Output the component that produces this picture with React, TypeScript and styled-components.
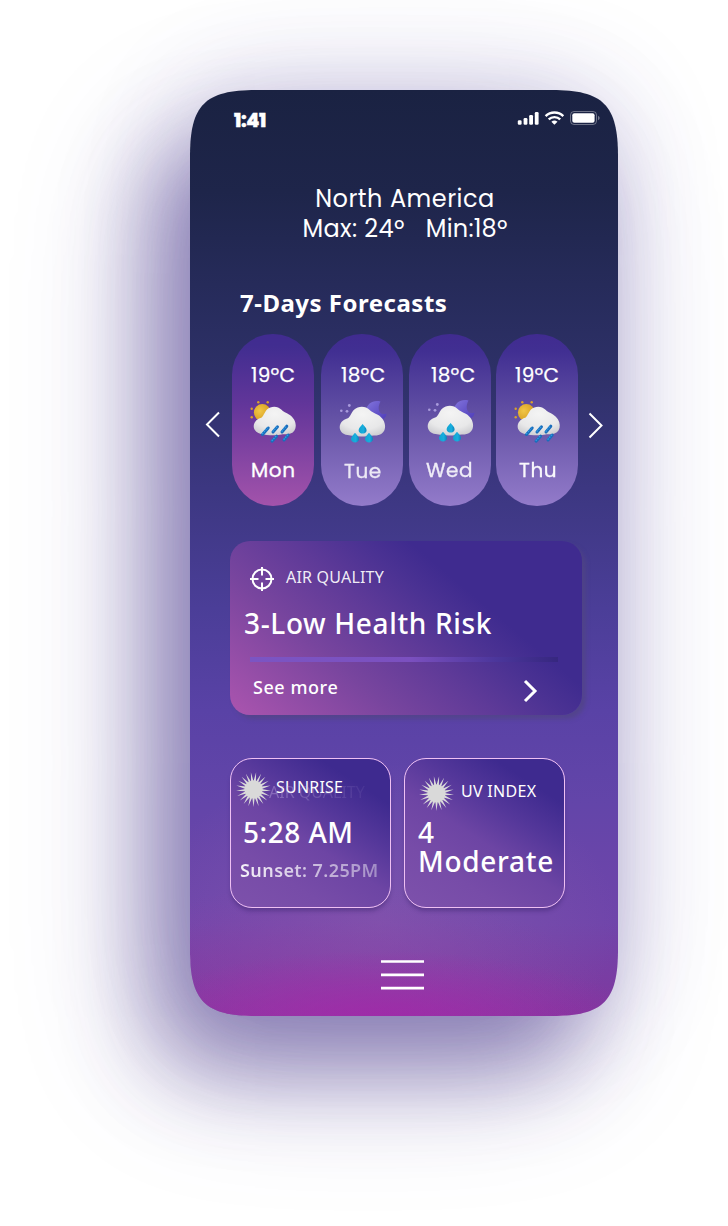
import React from "react";
import styled, { createGlobalStyle } from "styled-components";

const GlobalStyle = createGlobalStyle`
  * { box-sizing: border-box; }
  html, body { margin: 0; background: #fff; }
`;

const geometric = `"Poppins", Inter, sans-serif`;
const humanist = `"Noto Sans", "Open Sans", sans-serif`;

const Stage = styled.main`
  width: 728px;
  height: 1226px;
  padding: 90px 110px 0 190px;
  overflow: hidden;
  background: #fff;
`;

const Shadow = styled.div`
  width: 428px;
  height: 926px;
  border-radius: 62px;
  box-shadow:
    0 0 110px rgba(62, 44, 145, 0.2),
    -38px 56px 90px rgba(58, 38, 125, 0.45),
    -36px 50px 150px rgba(62, 44, 145, 0.2);
`;

const Phone = styled.div`
  width: 428px;
  height: 926px;
  display: flex;
  flex-direction: column;
  color: #fff;
  clip-path: path("M0 66C0 15 15 0 66 0H362C413 0 428 15 428 66V860C428 911 413 926 362 926H66C15 926 0 911 0 860Z");
  background:
    radial-gradient(ellipse 260px 75px at 45% 101%, rgba(166, 36, 170, 0.8), rgba(164, 36, 170, 0) 100%),
    radial-gradient(ellipse 300px 130px at 30% 100%, rgba(150, 60, 165, 0.6), rgba(145, 70, 170, 0) 100%),
    radial-gradient(ellipse 240px 160px at 44% 90%, rgba(138, 98, 176, 0.5), rgba(138, 98, 176, 0) 100%),
    linear-gradient(180deg, #1a2242 0%, #1e254a 11%, #262b5a 21%, #2d3067 30%, #3c3781 43%, #4b3e98 56%, #5942a6 67%, #6345a9 77%, #7045aa 90%, #80379e 100%);
`;

const StatusBar = styled.div`
  height: 50px;
  padding: 19px 17px 0 43px;
  display: flex;
  justify-content: space-between;
  align-items: flex-start;
`;

const Clock = styled.span`
  margin: 0 0 0 1px;
  font: 800 19px/24px ${geometric};
  letter-spacing: -0.4px;
  -webkit-text-stroke: 0.4px #fff;
`;

const Region = styled.header`
  margin-top: 44px;
  height: 60px;
  padding-left: 2px;
  display: flex;
  flex-direction: column;
  align-items: center;
  font: 400 24px/30px ${geometric};
`;

const Range = styled.div`
  display: flex;
  gap: 21px;
`;

const Label = styled.span<{ $s?: number }>`
  white-space: pre;
  letter-spacing: ${(p) => p.$s ?? 0}px;
`;

const ForecastTitle = styled.h2`
  margin: 43px 0 0 50px;
  height: 32px;
  font: 700 24px/32px ${humanist};
  letter-spacing: 0.5px;
`;

const Carousel = styled.section`
  margin-top: 15px;
  height: 172px;
  display: flex;
  padding-left: 15px;
`;

const Arrow = styled.button<{ $w: number; $top: number }>`
  all: unset;
  align-self: flex-start;
  width: ${(p) => p.$w}px;
  padding-top: ${(p) => p.$top}px;
  svg { display: block; }
`;

const Pill = styled.article<{ $warm?: boolean; $gap: number }>`
  width: 82px;
  height: 172px;
  margin-right: ${(p) => p.$gap}px;
  border-radius: 41px;
  overflow: hidden;
  background: ${(p) =>
    p.$warm
      ? "linear-gradient(180deg, #412b90 0%, #412d90 7%, #63369a 42%, #a353ab 100%)"
      : "linear-gradient(180deg, #402b90 0%, #412f92 10%, #6553a6 50%, #937bca 100%)"};
`;

const Temp = styled.div<{ $x: number }>`
  margin: 28px 0 0 ${(p) => p.$x}px;
  font: 400 20px/26px ${geometric};
  letter-spacing: 0.3px;
  -webkit-text-stroke: 0.25px #fff;
  white-space: nowrap;
`;

const IconSlot = styled.div<{ $x: number; $y: number }>`
  height: 69px;
  padding: ${(p) => p.$y}px 0 0 ${(p) => p.$x}px;
  svg { display: block; }
`;

const Day = styled.div<{ $x: number; $y?: number; $s: number; $o?: number }>`
  margin: ${(p) => p.$y ?? 0}px 0 0 ${(p) => p.$x}px;
  font: 400 20px/26px ${geometric};
  letter-spacing: ${(p) => p.$s}px;
  -webkit-text-stroke: 0.3px #fff;
  opacity: ${(p) => p.$o ?? 1};
  white-space: nowrap;
`;

const AirCard = styled.section`
  margin: 35px 0 0 40px;
  width: 352px;
  height: 174px;
  border-radius: 20px;
  padding-top: 24px;
  background: linear-gradient(40deg, #a653ad 3%, #78459e 30%, #5e3a98 48%, #4b3293 60%, #3f2b8f 69%);
  box-shadow: 4px 4px 4px rgba(80, 68, 130, 0.7);
`;

const AirHead = styled.div`
  height: 28px;
  padding-left: 19px;
  display: flex;
  gap: 11px;
  font: 400 16px/24px ${humanist};
  color: rgba(255, 255, 255, 0.92);
`;

const AirTitle = styled.h3`
  margin: 10px 0 0 14px;
  height: 42px;
  font: 500 28px/40px ${humanist};
  letter-spacing: 0.65px;
`;

const Meter = styled.div`
  margin: 12px 0 0 20px;
  width: 308px;
  height: 5px;
  background: linear-gradient(90deg, #7b55c3 0%, #7b50bf 52%, #4b369b 80%, #36277f 100%);
`;

const More = styled.div`
  margin: 13px 44px 0 23px;
  display: flex;
  justify-content: space-between;
  font: 500 18px/25px ${humanist};
  letter-spacing: 0.55px;
  svg { display: block; margin-top: 4px; }
`;

const Cards = styled.section`
  margin: 43px 0 0 40px;
  display: flex;
  gap: 13px;
`;

const SmallCard = styled.article`
  width: 161px;
  height: 150px;
  border: 1px solid #efc0f3;
  border-radius: 22px;
  background: linear-gradient(213deg, #3e2a8f 18%, #54379a 36%, #6d45a4 54%, #774ca8 75%, #7d51ab 100%) padding-box;
  box-shadow: 0 4px 4px -1px rgba(50, 30, 100, 0.4);
  font-family: ${humanist};
`;

const SmallHead = styled.div<{ $x: number; $y: number }>`
  position: relative;
  height: 59px;
  display: flex;
  padding: ${(p) => p.$y}px 0 0 ${(p) => p.$x}px;
  svg { flex: none; display: block; }
`;

const Caption = styled.span<{ $x: number; $y: number; $s?: number }>`
  margin: ${(p) => p.$y}px 0 0 ${(p) => p.$x}px;
  font: 400 16px/22px ${humanist};
  letter-spacing: ${(p) => p.$s ?? 0}px;
  white-space: nowrap;
`;

const Ghost = styled.span`
  position: absolute;
  left: 38px;
  top: 22px;
  font: 400 16px/22px ${humanist};
  white-space: nowrap;
  color: transparent;
  background: linear-gradient(90deg, rgba(200, 180, 230, 0.4), rgba(200, 180, 230, 0.08));
  background-clip: text;
`;

const Value = styled.div<{ $x: number; $s?: number }>`
  margin-left: ${(p) => p.$x}px;
  font: 500 28px/29px ${humanist};
  letter-spacing: ${(p) => p.$s ?? 0}px;
  white-space: nowrap;
`;

const Sunset = styled.div`
  display: inline-block;
  margin: 10px 0 0 9px;
  font: 600 18px/26px ${humanist};
  letter-spacing: 0.42px;
  white-space: nowrap;
  color: transparent;
  background: linear-gradient(90deg, rgba(255, 255, 255, 0.92), rgba(255, 255, 255, 0.4));
  background-clip: text;
`;

const Menu = styled.button`
  all: unset;
  margin: 52px 0 0 191px;
  width: 43px;
  height: 30px;
  svg { display: block; }
`;

const StatusIcons = () => (
  <svg width="84" height="18" viewBox="0 0 84 18" fill="#fff">
    <rect x="0.8" y="11.2" width="3.8" height="4.5" rx="1.2" />
    <rect x="6.6" y="9" width="3.8" height="6.7" rx="1.2" />
    <rect x="12.2" y="6" width="3.8" height="9.7" rx="1.2" />
    <rect x="17.8" y="3" width="3.8" height="12.7" rx="1.2" />
    <g fill="none" stroke="#fff" strokeWidth="2.4">
      <path d="M28.6 7.1C33.5 2.2 41.5 2.2 46.3 7.1" />
      <path d="M31.7 10.4C34.8 7.4 40.1 7.4 43.2 10.4" />
    </g>
    <path d="M34.400 12.700Q37.400 10.400 40.500 12.700L37.400 15.800Z" />
    <rect x="53.500" y="2.500" width="26" height="13" rx="3.500" fill="none" stroke="#fff" strokeOpacity=".36" />
    <rect x="55.300" y="4.300" width="22.300" height="9.400" rx="2" />
    <path d="M81 6.700v4.600q1.700-.7 1.700-2.300T81 6.700Z" fillOpacity=".4" />
  </svg>
);

const Defs = () => (
  <svg width="0" height="0" style={{ display: "block", position: "absolute" }}>
    <defs>
      <radialGradient id="cloud" cx=".5" cy=".25" r=".8">
        <stop offset="0" stopColor="#f4f4f4" />
        <stop offset=".65" stopColor="#e8e8e9" />
        <stop offset="1" stopColor="#cbcbcf" />
      </radialGradient>
      <radialGradient id="sun" cx=".35" cy=".4" r=".7">
        <stop offset="0" stopColor="#f1c647" />
        <stop offset="1" stopColor="#d49a1c" />
      </radialGradient>
      <linearGradient id="moon" x1="0" y1="0" x2="1" y2="1">
        <stop offset="0" stopColor="#8274dc" />
        <stop offset="1" stopColor="#4d3bb8" />
      </linearGradient>
      <linearGradient id="drop" x1="0" y1="0" x2="1" y2="0">
        <stop offset="0" stopColor="#12a3d0" />
        <stop offset=".6" stopColor="#18aede" />
        <stop offset="1" stopColor="#0a84bb" />
      </linearGradient>
    </defs>
  </svg>
);

const CLOUD =
  "M11 33C1 31 1.500 19.500 11.200 16.800C13.500 15.500 14.500 11 17 8.500C21 4.600 28 4.800 31.200 8.600C33 10.800 36.500 11.800 39 13.500C47.500 18.500 48 30 40.500 32.600C37 34 34 33 30 33.800C23 35 16 34 11 33Z";

const SunRain = () => (
  <svg width="48" height="43" viewBox="0 0 48 43">
    <g fill="#d9a02c">
      <circle cx="8.300" cy="1.200" r="1.200" /><circle cx="17.700" cy="1.200" r="1.200" />
      <circle cx="1.700" cy="7.700" r="1.200" /><circle cx="1.700" cy="16.300" r="1.200" />
    </g>
    <circle cx="12.300" cy="11.500" r="8.400" fill="url(#sun)" />
    <path d={CLOUD} fill="url(#cloud)" />
    <g stroke="#1a6dbb" strokeWidth="3" strokeLinecap="round">
      <path d="M12.500 33.500L18.200 27M23 31L27.500 25.800M32 31L36.800 25.200M22 40.200L26.600 35.200M34 39L38.200 34" />
    </g>
    <g stroke="#2f9be6" strokeWidth="1.400" strokeDasharray="1.500 1">
      <path d="M12.200 33L17.800 26.600M22.700 30.600L27.200 25.500M31.700 30.600L36.400 24.900M21.700 39.800L26.200 34.900M33.600 38.600L37.800 33.700" />
    </g>
  </svg>
);

const Drop = ({ x, y }: { x: number; y: number }) => (
  <path
    d="M0-5C2-2.600 4-.8 4 1.200C4 5.700-4 5.700-4 1.200C-4-.8-2-2.600 0-5Z"
    transform={`translate(${x} ${y})`}
    fill="url(#drop)"
  />
);

const MoonRain = () => (
  <svg width="48" height="43" viewBox="0 0 48 43">
    <g fill="#a99bdc">
      <circle cx="2.300" cy="9.800" r="1.300" /><circle cx="8" cy="10.300" r="1.400" /><circle cx="10.300" cy="4.500" r="1.400" />
    </g>
    <path d="M41.500 .5C34-1.500 28 3 27 9C28 19 37 23 43.500 18.500C46 17 47.500 15 47.500 12.500C41.500 15 37 9 41.500 .5Z" fill="url(#moon)" />
    <path d={CLOUD} fill="url(#cloud)" transform="translate(-3.300 -.2) scale(1.079 1.040)" />
    <Drop x={23.600} y={28} />
    <Drop x={16} y={36.800} />
    <Drop x={30} y={36.800} />
  </svg>
);

const RAYS = 21;
const STAR = Array.from({ length: RAYS * 2 }, (_, i) => {
  const a = ((i * 180) / RAYS + 90) * (Math.PI / 180);
  const r = i % 2 ? 8.2 : 17.5;
  return `${(17.5 + r * Math.cos(a)).toFixed(2)},${(17.5 + r * Math.sin(a)).toFixed(2)}`;
}).join(" ");

const Burst = () => (
  <svg width="35" height="35" viewBox="0 0 35 35" fill="#d9d9d9">
    <polygon points={STAR} />
    <circle cx="17.500" cy="17.500" r="9" />
  </svg>
);

const Crosshair = () => (
  <svg width="26" height="28" viewBox="0 0 26 28" fill="none" stroke="#fff" strokeWidth="2">
    <circle cx="13" cy="14" r="9.500" />
    <path d="M13 2v8.500M13 17.500v8.500M1 14h8.500M16.500 14h8.500" />
  </svg>
);

const days = [
  { temp: "19ºC", tx: 19, icon: "sun", ix: 18, iy: 13, day: "Mon", dx: 19, dy: 0, s: 0.6, o: 1, gap: 7, warm: true },
  { temp: "18ºC", tx: 20, icon: "moon", ix: 18, iy: 13, day: "Tue", dx: 23, dy: 1, s: 0.6, o: 0.85, gap: 6 },
  { temp: "18ºC", tx: 22, icon: "moon", ix: 18, iy: 12, day: "Wed", dx: 17, dy: 0, s: 0.6, o: 0.88, gap: 5 },
  { temp: "19ºC", tx: 19, icon: "sun", ix: 18, iy: 13, day: "Thu", dx: 23, dy: 0, s: 0.6, o: 0.96, gap: 10 },
];

export default function App() {
  return (
    <>
      <GlobalStyle />
      <Defs />
      <Stage>
        <Shadow>
          <Phone>
            <StatusBar>
              <Clock>1:41</Clock>
              <StatusIcons />
            </StatusBar>
            <Region>
              <Label $s={0.5}>North America</Label>
              <Range>
                <Label $s={0.4}>Max: 24º</Label>
                <Label $s={0.2}>Min:18º</Label>
              </Range>
            </Region>
            <ForecastTitle>7-Days Forecasts</ForecastTitle>
            <Carousel>
              <Arrow $w={27} $top={77} aria-label="Previous">
                <svg width="16" height="27" viewBox="0 0 16 27" fill="none" stroke="#fff" strokeWidth="2">
                  <path d="M14 1.500L2 13.500L14 25.500" />
                </svg>
              </Arrow>
              {days.map((d) => (
                <Pill key={d.day} $warm={d.warm} $gap={d.gap}>
                  <Temp $x={d.tx}>{d.temp}</Temp>
                  <IconSlot $x={d.ix} $y={d.iy}>{d.icon === "sun" ? <SunRain /> : <MoonRain />}</IconSlot>
                  <Day $x={d.dx} $y={d.dy} $s={d.s} $o={d.o}>{d.day}</Day>
                </Pill>
              ))}
              <Arrow $w={16} $top={78} aria-label="Next">
                <svg width="16" height="27" viewBox="0 0 16 27" fill="none" stroke="#fff" strokeWidth="2">
                  <path d="M1.500 1.500L13.500 13.500L1.500 25.500" />
                </svg>
              </Arrow>
            </Carousel>
            <AirCard>
              <AirHead>
                <Crosshair />
                <Label $s={0.2}>AIR QUALITY</Label>
              </AirHead>
              <AirTitle>3-Low Health Risk</AirTitle>
              <Meter />
              <More>
                See more
                <svg width="15" height="24" viewBox="0 0 15 24" fill="none" stroke="#fff" strokeWidth="3">
                  <path d="M2 2L12 12L2 22" />
                </svg>
              </More>
            </AirCard>
            <Cards>
              <SmallCard>
                <SmallHead $x={4.5} $y={13}>
                  <Ghost>AIR QUALITY</Ghost>
                  <Burst />
                  <Caption $x={5.5} $y={4} $s={0.2}>SUNRISE</Caption>
                </SmallHead>
                <Value $x={12} $s={0.5}>5:28 AM</Value>
                <Sunset>Sunset: 7.25PM</Sunset>
              </SmallCard>
              <SmallCard>
                <SmallHead $x={13.5} $y={16.5}>
                  <Burst />
                  <Caption $x={7.5} $y={4.5} $s={0.3}>UV INDEX</Caption>
                </SmallHead>
                <Value $x={13}>4</Value>
                <Value $x={13} $s={0.7}>Moderate</Value>
              </SmallCard>
            </Cards>
            <Menu aria-label="Menu">
              <svg width="43" height="30" viewBox="0 0 43 30" stroke="#fff" strokeWidth="2.700">
                <path d="M0 1.500H43M0 14.800H43M0 28.200H43" />
              </svg>
            </Menu>
          </Phone>
        </Shadow>
      </Stage>
    </>
  );
}
